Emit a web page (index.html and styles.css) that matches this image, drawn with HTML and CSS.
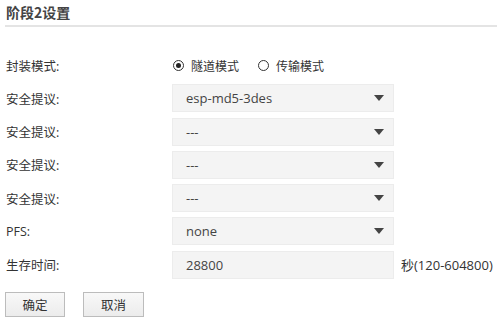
FILE: index.html
```html
<!DOCTYPE html>
<html>
<head>
<meta charset="utf-8">
<link rel="stylesheet" href="styles.css">
</head>
<body>
<div class="page">
  <div class="title">阶段2设置</div>
  <div class="form">
    <div class="row">
      <div class="label">封装模式:</div>
      <div class="radios">
        <span class="radio checked"><span class="dot"></span></span><span class="rtext">隧道模式</span>
        <span class="radio second"></span><span class="rtext">传输模式</span>
      </div>
    </div>
    <div class="row">
      <div class="label">安全提议:</div>
      <div class="select"><span>esp-md5-3des</span><span class="arrow"></span></div>
    </div>
    <div class="row">
      <div class="label">安全提议:</div>
      <div class="select"><span>---</span><span class="arrow"></span></div>
    </div>
    <div class="row">
      <div class="label">安全提议:</div>
      <div class="select"><span>---</span><span class="arrow"></span></div>
    </div>
    <div class="row">
      <div class="label">安全提议:</div>
      <div class="select"><span>---</span><span class="arrow"></span></div>
    </div>
    <div class="row">
      <div class="label">PFS:</div>
      <div class="select"><span>none</span><span class="arrow"></span></div>
    </div>
    <div class="row">
      <div class="label">生存时间:</div>
      <div class="select input"><span>28800</span></div>
      <div class="suffix">秒(120-604800)</div>
    </div>
  </div>
  <div class="buttons">
    <button class="btn">确定</button>
    <button class="btn cancel">取消</button>
  </div>
</div>
</body>
</html>
```

FILE: styles.css
```css
html, body {
  margin: 0;
  padding: 0;
  background: #ffffff;
}
body {
  font-family: "Open Sans", "Noto Sans CJK SC", sans-serif;
  font-size: 13px;
  color: #333333;
}
.page {
  width: 500px;
  height: 323px;
  padding: 0 3px 0 5px;
  box-sizing: border-box;
}
.title {
  font-family: "Noto Sans CJK SC", sans-serif;
  font-weight: bold;
  font-size: 14px;
  color: #444444;
  height: 25px;
  line-height: 24px;
  padding-left: 1px;
  border-bottom: 2px solid #e4e4e4;
}
.form {
  display: flex;
  flex-direction: column;
  gap: 5.3px;
  margin-top: 24px;
}
.row {
  display: flex;
  align-items: center;
  height: 28px;
}
.label {
  width: 166px;
  padding-left: 1px;
  font-family: "Open Sans", "Noto Sans CJK SC", sans-serif;
  font-size: 12.5px;
  color: #333333;
}
.radios {
  display: flex;
  align-items: center;
  font-family: "Noto Sans CJK SC", sans-serif;
  font-size: 12px;
}
.radio {
  width: 9px;
  height: 9px;
  border: 1.5px solid #333333;
  border-radius: 50%;
  display: flex;
  align-items: center;
  justify-content: center;
  margin-left: 1px;
}
.radio .dot {
  width: 5px;
  height: 5px;
  border-radius: 50%;
  background: #222222;
}
.radio.second {
  margin-left: 19px;
}
.rtext {
  margin-left: 7px;
}
.select {
  width: 222px;
  height: 28px;
  box-sizing: border-box;
  background: #f4f4f4;
  border: 1px solid #ececec;
  display: flex;
  align-items: center;
  justify-content: space-between;
  padding: 0 9px 0 13px;
  font-size: 13px;
  color: #444444;
}
.arrow {
  width: 0;
  height: 0;
  border-left: 5px solid transparent;
  border-right: 5px solid transparent;
  border-top: 6px solid #444444;
}
.suffix {
  margin-left: 7px;
  font-size: 13px;
  color: #333333;
}
.buttons {
  display: flex;
  gap: 18px;
  margin-top: 13px;
}
.btn {
  width: 60px;
  height: 25px;
  margin: 0;
  padding: 0;
  border: 1px solid #bcbcbc;
  background: linear-gradient(#f8f8f8, #ececec);
  font-family: "Noto Sans CJK SC", sans-serif;
  font-size: 12.5px;
  color: #333333;
}
.btn.cancel {
  width: 61px;
}
```
